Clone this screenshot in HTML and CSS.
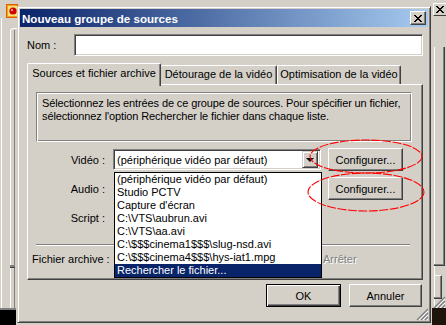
FILE: index.html
```html
<!DOCTYPE html>
<html lang="fr">
<head>
    <meta charset="UTF-8">
    <meta name="viewport" content="width=device-width, initial-scale=1.0">
    <title>Nouveau groupe de sources</title>
    <link rel="stylesheet" href="styles.css">
</head>
<body>

<div class="desk">

    <!-- fenetre derriere -->
    <svg class="bg-icon" width="12" height="14" viewBox="0 0 12 14">
        <rect x="0.5" y="0.5" width="11" height="13" fill="#f0a020" stroke="#e06000"/>
        <rect x="2" y="2" width="9" height="10" fill="#f8e070"/>
        <circle cx="7" cy="7" r="3.6" fill="#d00000"/>
        <circle cx="6" cy="6" r="1.2" fill="#ff9090"/>
    </svg>
    <div class="bg-close">
        <svg width="10" height="9" viewBox="0 0 10 9"><path d="M1 1 L8 8 M2 1 L9 8 M8 1 L1 8 M9 1 L2 8" stroke="#000" stroke-width="1"/></svg>
    </div>
    <div class="bg-line l1"></div>
    <div class="bg-line l2"></div>
    <div class="bg-line l3"></div>
    <div class="bg-corner"></div>
    <div class="bg-mark"></div>
    <div class="bg-right-line"></div>
    <div class="bg-box b1"></div>
    <div class="bg-box b2"></div>
    <svg class="bg-grip" width="13" height="13" viewBox="0 0 13 13">
        <path d="M12 1 L1 12 M12 5 L5 12 M12 9 L9 12" stroke="#808080" stroke-width="1.4"/>
        <path d="M12 3 L3 12 M12 7 L7 12 M12 11 L11 12" stroke="#fff" stroke-width="1"/>
    </svg>
    <div class="bg-dark-left"></div>
    <div class="bg-dark-right"></div>

    <!-- dialogue -->
    <div class="dialog">
        <div class="titlebar">
            <span class="title">Nouveau groupe de sources</span>
            <div class="close">
                <svg width="10" height="9" viewBox="0 0 10 9"><path d="M1 1 L8 8 M2 1 L9 8 M8 1 L1 8 M9 1 L2 8" stroke="#000" stroke-width="1"/></svg>
            </div>
        </div>

        <div class="dlg-body">
            <div class="row-nom">
                <label class="lbl-nom">Nom :</label>
                <div class="field nom-field"></div>
            </div>

            <div class="tabs">
                <div class="tab active">Sources et fichier archive</div>
                <div class="tab t2">Détourage de la vidéo</div>
                <div class="tab t3">Optimisation de la vidéo</div>
            </div>

            <div class="panel">
                <div class="info">
                    Sélectionnez les entrées de ce groupe de sources. Pour spécifier un fichier,<br>
                    sélectionnez l'option Rechercher le fichier dans chaque liste.
                </div>

                <div class="src-grid">
                    <div class="lbl">Vidéo :</div>
                    <div class="field combo">
                        <span class="combo-text">(périphérique vidéo par défaut)</span>
                        <div class="combo-btn"><span class="arrow"></span></div>
                    </div>
                    <div class="btn">Configurer...</div>

                    <div class="lbl">Audio :</div>
                    <div></div>
                    <div class="btn">Configurer...</div>

                    <div class="lbl">Script :</div>
                    <div></div>
                    <div></div>
                </div>

                <div class="sep"></div>

                <div class="archive-row">
                    <span class="lbl-archive">Fichier archive :</span>
                    <span class="disabled">Arrêter</span>
                </div>

                <ul class="droplist">
                    <li>(périphérique vidéo par défaut)</li>
                    <li>Studio PCTV</li>
                    <li>Capture d'écran</li>
                    <li>C:\VTS\aubrun.avi</li>
                    <li>C:\VTS\aa.avi</li>
                    <li>C:\$$$cinema1$$$\slug-nsd.avi</li>
                    <li>C:\$$$cinema4$$$\hys-iat1.mpg</li>
                    <li class="sel">Rechercher le fichier...</li>
                </ul>
            </div>

            <div class="actions">
                <div class="btn default">OK</div>
                <div class="btn">Annuler</div>
            </div>
        </div>

        <svg class="grip" width="13" height="13" viewBox="0 0 13 13">
            <path d="M12 1 L1 12 M12 5 L5 12 M12 9 L9 12" stroke="#808080" stroke-width="1.4"/>
            <path d="M12 3 L3 12 M12 7 L7 12 M12 11 L11 12" stroke="#fff" stroke-width="1"/>
        </svg>
    </div>

    <!-- annotations rouges -->
    <svg class="marks" width="124" height="80" viewBox="0 0 124 80">
        <ellipse cx="62" cy="21.5" rx="56" ry="16.5" fill="none" stroke="#ff0000" stroke-width="1.1" stroke-dasharray="9 1.5"/>
        <ellipse cx="62" cy="57" rx="58" ry="19" fill="none" stroke="#ff0000" stroke-width="1.1" stroke-dasharray="9 1.5"/>
    </svg>
</div>

</body>
</html>
```

FILE: styles.css
```css
body {
    margin: 0;
    font-family: "Liberation Sans", Arial, sans-serif;
    font-size: 11px;
    color: #000;
}
.desk {
    position: relative;
    width: 446px;
    height: 325px;
    overflow: hidden;
    background: #d4d0c8;
}

/* fenetre derriere */
.bg-icon { position: absolute; left: 6px; top: 4px; }
.bg-close {
    position: absolute;
    left: 433px;
    top: 3px;
    width: 14px;
    height: 13px;
    box-sizing: border-box;
    border: 1px solid;
    border-color: #fff #404040 #404040 #fff;
    display: flex;
    align-items: center;
    justify-content: center;
}
.bg-line { position: absolute; top: 18px; width: 1px; height: 290px; }
.bg-line.l1 { left: 1px; background: #fff; }
.bg-line.l2 { left: 10px; top: 30px; height: 278px; background: #fff; }
.bg-line.l3 { left: 14px; top: 30px; height: 278px; background: #808080; }
.bg-corner {
    position: absolute;
    left: 10px;
    top: 28px;
    width: 20px;
    height: 20px;
    border-top: 1px solid #fff;
    border-left: 1px solid #fff;
    border-top-left-radius: 4px;
}
.bg-mark { position: absolute; left: 10px; top: 265px; width: 5px; height: 2px; background: #808080; border-bottom: 1px solid #404040; }
.bg-right-line { position: absolute; left: 434px; top: 47px; width: 1px; height: 260px; background: #fff; }
.bg-box {
    position: absolute;
    left: 434px;
    border-right: 1px solid #404040;
    border-bottom: 1px solid #404040;
    box-shadow: inset -1px -1px #808080;
}
.bg-box.b1 { top: 47px; width: 10px; height: 218px; }
.bg-box.b2 { top: 275px; width: 7px; height: 22px; border-top: 1px solid #fff; }
.bg-grip { position: absolute; left: 433px; top: 296px; }
.bg-dark-left { position: absolute; left: 0; top: 308px; width: 16px; height: 17px; background: #000; border-top: 2px solid #808080; }
.bg-dark-right { position: absolute; left: 432px; top: 308px; width: 14px; height: 17px; background: #1e140c; }

/* dialogue */
.dialog {
    position: absolute;
    left: 17px;
    top: 6px;
    width: 414px;
    height: 317px;
    box-sizing: border-box;
    padding: 2px;
    background: #d4d0c8;
    border: 1px solid;
    border-color: #d4d0c8 #404040 #404040 #d4d0c8;
    box-shadow: inset 1px 1px #fff, inset -1px -1px #808080;
}
.titlebar {
    height: 18px;
    display: flex;
    align-items: center;
    justify-content: space-between;
    padding: 0 2px 0 2px;
    background: linear-gradient(to right, #0a246a, #a6caf0);
}
.title {
    color: #fff;
    font-weight: bold;
    font-size: 11.6px;
}
.close {
    width: 16px;
    height: 14px;
    box-sizing: border-box;
    background: #d4d0c8;
    border: 1px solid;
    border-color: #fff #404040 #404040 #fff;
    box-shadow: inset -1px -1px #808080;
    display: flex;
    align-items: center;
    justify-content: center;
}
.dlg-body {
    padding: 7px 5px 0 7px;
}

.row-nom {
    display: flex;
    align-items: center;
    height: 22px;
}
.lbl-nom { width: 47px; }
.field {
    box-sizing: border-box;
    background: #fff;
    border: 1px solid;
    border-color: #808080 #fff #fff #808080;
    box-shadow: inset 1px 1px #404040, inset -1px -1px #d4d0c8;
}
.nom-field { width: 349px; height: 22px; }

.tabs {
    display: flex;
    align-items: flex-end;
    margin-top: 7px;
    height: 21px;
    position: relative;
    z-index: 1;
}
.tab {
    box-sizing: border-box;
    height: 19px;
    padding-top: 2px;
    text-align: center;
    border-top: 1px solid #fff;
    border-left: 1px solid #fff;
    border-right: 1px solid #404040;
    border-radius: 2px 2px 0 0;
    box-shadow: inset -1px 0 #808080;
}
.tab.active {
    width: 134px;
    height: 23px;
    margin-bottom: -2px;
    padding-top: 3px;
    background: #d4d0c8;
}
.tab.t2 { width: 116px; border-left: none; }
.tab.t3 { width: 124px; }

.panel {
    position: relative;
    width: 396px;
    height: 196px;
    box-sizing: border-box;
    border: 1px solid;
    border-color: #fff #404040 #404040 #fff;
    box-shadow: inset -1px -1px #808080;
}
.info {
    margin: 7px 10px 0 8px;
    height: 50px;
    box-sizing: border-box;
    padding: 4px 0 0 5px;
    line-height: 13px;
    letter-spacing: -0.12px;
    border: 1px solid;
    border-color: #808080 #fff #fff #808080;
    box-shadow: inset 1px 1px #fff, inset -1px -1px #808080;
}

.src-grid {
    display: grid;
    grid-template-columns: 78px 208px 75px;
    grid-auto-rows: 23px;
    column-gap: 7px;
    row-gap: 6px;
    margin-top: 6px;
}
.lbl {
    align-self: center;
    text-align: right;
    padding-right: 1px;
}
.combo {
    align-self: center;
    height: 21px;
    display: flex;
    align-items: center;
    justify-content: space-between;
    padding: 0 2px 0 3px;
}
.combo-btn {
    width: 16px;
    height: 17px;
    box-sizing: border-box;
    background: #d4d0c8;
    border: 1px solid;
    border-color: #d4d0c8 #404040 #404040 #d4d0c8;
    box-shadow: inset 1px 1px #fff, inset -1px -1px #808080;
    display: flex;
    align-items: center;
    justify-content: center;
}
.arrow {
    width: 0;
    height: 0;
    border-left: 4px solid transparent;
    border-right: 4px solid transparent;
    border-top: 4px solid #000;
    margin-top: 1px;
}
.btn {
    box-sizing: border-box;
    background: #d4d0c8;
    border: 1px solid;
    border-color: #fff #404040 #404040 #fff;
    box-shadow: inset -1px -1px #808080;
    display: flex;
    align-items: center;
    justify-content: center;
}
.btn.default {
    border-color: #000;
    box-shadow: inset 1px 1px #fff, inset -1px -1px #404040, inset -2px -2px #808080;
}

.sep {
    margin: 15px 12px 0 8px;
    height: 1px;
    background: #808080;
    border-bottom: 1px solid #fff;
}
.archive-row {
    display: flex;
    align-items: center;
    height: 26px;
    padding-left: 4px;
}
.lbl-archive { width: 291px; }
.disabled {
    color: #808080;
    text-shadow: 1px 1px #fff;
}

.droplist {
    position: absolute;
    left: 86px;
    top: 87px;
    width: 208px;
    margin: 0;
    padding: 0;
    list-style: none;
    box-sizing: border-box;
    background: #fff;
    border: 1px solid #000;
}
.droplist li {
    height: 13px;
    line-height: 13px;
    padding-left: 2px;
    white-space: nowrap;
}
.droplist li.sel {
    background: #0a246a;
    color: #fff;
}

.actions {
    display: flex;
    justify-content: flex-end;
    gap: 8px;
    margin-top: 4px;
    padding-right: 1px;
}
.actions .btn { width: 75px; height: 23px; }
.actions .btn + .btn { width: 73px; }

.grip { position: absolute; right: 1px; bottom: 1px; }

.marks { position: absolute; left: 304px; top: 135px; }
```
